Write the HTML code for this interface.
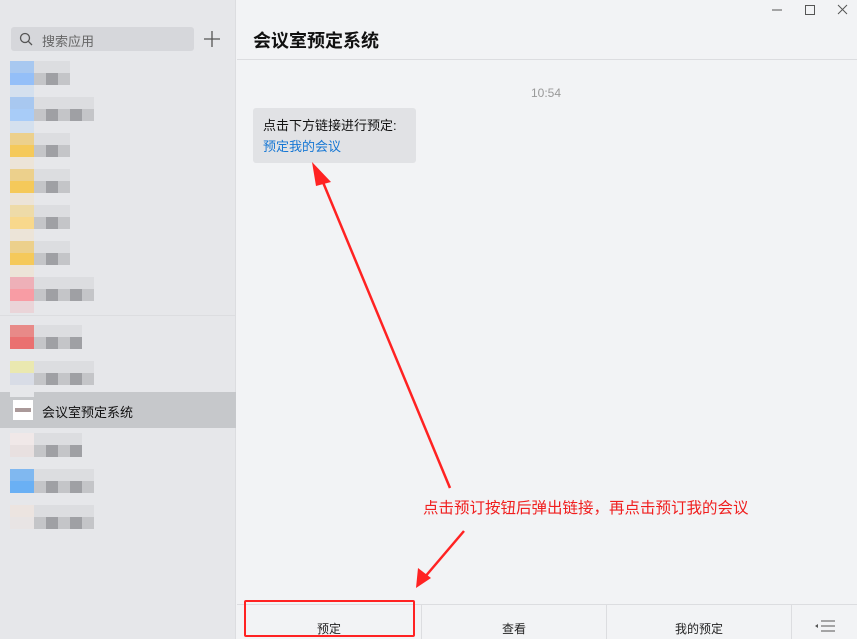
<!DOCTYPE html><html><head><meta charset="utf-8"><style>
*{margin:0;padding:0;box-sizing:border-box}
body{width:857px;height:639px;overflow:hidden;font-family:"Liberation Sans","Noto Sans CJK SC",sans-serif;background:#f2f3f5;position:relative}
.side{position:absolute;left:0;top:0;width:236px;height:639px;background:#e6e7ea;border-right:1px solid #dcdde0}
.b{position:absolute;width:12px;height:12px}
.search{position:absolute;left:11px;top:27px;width:183px;height:24px;background:#d6d7db;border-radius:3px;font-size:13px;color:#666;padding:4px 0 0 31px}
.abs{position:absolute}
.tb{position:absolute;top:605px;height:34px;border-left:1px solid #dcdde0;font-size:12px;text-align:center;padding-top:15px;color:#222}
</style></head><body>
<div class="side">
<div class="search">搜索应用</div>
<svg class="abs" style="left:19px;top:32px" width="14" height="14"><circle cx="6" cy="6" r="4.5" stroke="#555" stroke-width="1.3" fill="none"/><path d="M9.3 9.3L13 13" stroke="#555" stroke-width="1.3"/></svg>
<svg class="abs" style="left:204px;top:31px" width="16" height="16"><path d="M8 0V16M0 8H16" stroke="#555" stroke-width="1.3"/></svg>
<div class="abs" style="left:0;top:315px;width:236px;height:1px;background:#dcdde0"></div>
<div class="abs" style="left:0;top:392px;width:236px;height:36px;background:#c6c8cb"></div>
<div class="abs" style="left:13px;top:400px;width:20px;height:20px;background:#fff"><div style="margin:8px 2px;height:4px;background:#a99"></div></div>
<div class="abs" style="left:42px;top:402px;font-size:13px;color:#111">会议室预定系统</div>
<div id="px"></div>
</div>
<div class="abs" style="left:237px;top:59px;width:620px;height:1px;background:#dcdde0"></div>
<div class="abs" style="left:253px;top:27px;font-size:18px;font-weight:bold;color:#111">会议室预定系统</div>
<svg class="abs" style="left:770px;top:4px" width="82" height="12"><path d="M2 6H12" stroke="#555"/><rect x="35.5" y="1.5" width="9" height="9" stroke="#555" fill="none"/><path d="M68 1L77 10M77 1L68 10" stroke="#555"/></svg>
<div class="abs" style="left:531px;top:86px;font-size:12px;color:#999">10:54</div>
<div class="abs" style="left:253px;top:108px;width:163px;height:55px;background:#e1e2e5;border-radius:3px;padding:7px 10px;font-size:13px;line-height:21px;color:#111">点击下方链接进行预定:<br><span style="color:#1677d4">预定我的会议</span></div>
<div class="abs" style="left:423px;top:496px;font-size:15.5px;color:#f01e1e;white-space:nowrap">点击预订按钮后弹出链接，再点击预订我的会议</div>
<svg class="abs" style="left:0;top:0" width="857" height="639">
<path d="M450 488L320 175" stroke="#f22" stroke-width="2.5"/><path d="M312 162L331 182L316 186Z" fill="#f22"/>
<path d="M464 531L424 578" stroke="#f22" stroke-width="2.5"/><path d="M416 588L418 568L431 578Z" fill="#f22"/>
</svg>
<div class="abs" style="left:237px;top:604px;width:620px;height:1px;background:#dcdde0"></div>
<div class="tb" style="left:237px;width:184px;border:none">预定</div>
<div class="tb" style="left:421px;width:185px">查看</div>
<div class="tb" style="left:606px;width:185px">我的预定</div>
<div class="tb" style="left:791px;width:66px"></div>
<svg class="abs" style="left:814px;top:620px" width="22" height="12"><path d="M7 1H21M7 6H21M7 11H21" stroke="#555"/><path d="M1 6L4 4V8Z" fill="#555"/></svg>
<div class="abs" style="left:244px;top:600px;width:171px;height:37px;border:2px solid #f22;border-radius:2px"></div>
<script>
var rows=[61,97,133,169,205,241,277,325,361,433,469,505];
var ic=[["#a8c8f0","#94bff8","#d4e0ee"],["#a8c8f0","#a8ccf8","#d4e0ee"],["#ecd08c","#f5c95a","#ece4d8"],["#ecd08c","#f5c95a","#ece4d8"],["#eedba8","#f8d88c","#ece4d8"],["#ecd08c","#f5c95a","#ece4d8"],["#eeb0b8","#f89ca4","#ead4d8"],["#e88a88","#ea7070","#e6e7ea"],["#eae8b0","#d8dce6","#e6e7ea"],["#f0e8e8","#e8e0e0","#e6e7ea"],["#80b8f0","#6ab0f4","#e6e7ea"],["#ece4e0","#e8e4e4","#e6e7ea"]];
var w=[3,5,3,3,3,3,5,4,5,4,5,5];var h="";
rows.forEach(function(y,i){for(var r=0;r<3;r++){for(var c=0;c<2;c++)h+='<div class="b" style="left:'+(10+c*12)+'px;top:'+(y+r*12)+'px;background:'+ic[i][r]+'"></div>';}
for(var c=0;c<w[i];c++){h+='<div class="b" style="left:'+(34+c*12)+'px;top:'+y+'px;background:#dcdde0"></div>';h+='<div class="b" style="left:'+(34+c*12)+'px;top:'+(y+12)+'px;background:'+(c%2?'#9fa0a4':'#c4c5c8')+'"></div>';}});
document.getElementById("px").innerHTML=h;
</script>
</body></html>
